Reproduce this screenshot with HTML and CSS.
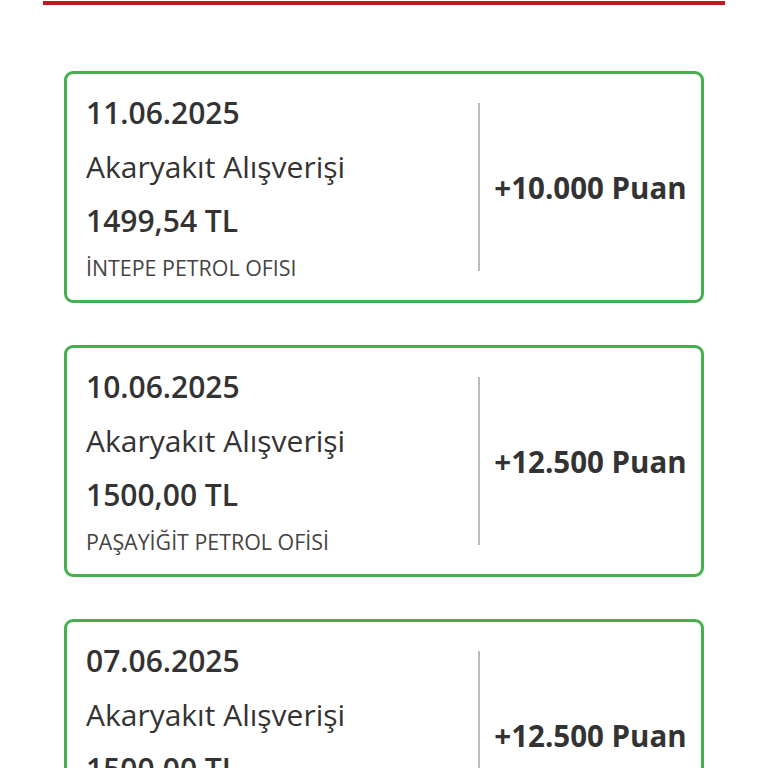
FILE: index.html
```html
<!DOCTYPE html>
<html lang="tr">
<head>
    <meta charset="UTF-8">
    <meta name="viewport" content="width=device-width, initial-scale=1.0">
    <title>Puan Hareketleri</title>
    <link rel="stylesheet" href="styles.css">
</head>
<body>
    <div class="top-line"></div>

    <!-- Transactions -->
    <div class="list">
        <div class="card">
            <div class="info">
                <div class="date">11.06.2025</div>
                <div class="type">Akaryakıt Alışverişi</div>
                <div class="amount">1499,54 TL</div>
                <div class="station">İNTEPE PETROL OFISI</div>
            </div>
            <div class="points">+10.000 Puan</div>
        </div>

        <div class="card">
            <div class="info">
                <div class="date">10.06.2025</div>
                <div class="type">Akaryakıt Alışverişi</div>
                <div class="amount">1500,00 TL</div>
                <div class="station">PAŞAYİĞİT PETROL OFİSİ</div>
            </div>
            <div class="points">+12.500 Puan</div>
        </div>

        <div class="card">
            <div class="info">
                <div class="date">07.06.2025</div>
                <div class="type">Akaryakıt Alışverişi</div>
                <div class="amount">1500,00 TL</div>
                <div class="station">PAŞAYİĞİT PETROL OFİSİ</div>
            </div>
            <div class="points">+12.500 Puan</div>
        </div>
    </div>
</body>
</html>
```

FILE: styles.css
```css
* {
    margin: 0;
    padding: 0;
    box-sizing: border-box;
    font-family: 'Open Sans', sans-serif;
}

body {
    background: #ffffff;
    color: #333333;
}

.top-line {
    height: 4px;
    margin: 1px 43px 0;
    background: #c4161c;
}

.list {
    display: flex;
    flex-direction: column;
    gap: 42px;
    padding: 66px 64px 40px;
}

.card {
    display: flex;
    border: 3px solid #46b04e;
    border-radius: 9px;
    background: #ffffff;
}

.info {
    flex: 1;
    padding: 12px 0 12px 19px;
}

.date,
.amount {
    font-size: 30px;
    font-weight: 600;
    line-height: 54px;
}

.type {
    font-size: 30px;
    line-height: 54px;
}

.station {
    font-size: 21.4px;
    line-height: 40px;
    color: #444444;
}

.points {
    width: 223px;
    margin: 29px 0;
    border-left: 2px solid #bbbbbb;
    display: flex;
    align-items: center;
    justify-content: center;
    font-size: 29.5px;
    font-weight: 700;
}
```
